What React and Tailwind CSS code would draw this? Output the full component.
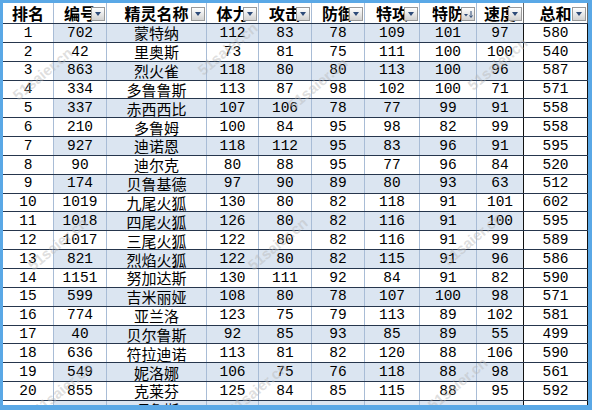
import React from "react"

const widths = [51, 53, 100, 52, 53, 53, 55, 57, 47, 64]
const headers = ["排名", "编号", "精灵名称", "体力", "攻击", "防御", "特攻", "特防", "速度", "总和"]

const rows = [
  [1, 702, "蒙特纳", 112, 83, 78, 109, 101, 97, 580],
  [2, 42, "里奥斯", 73, 81, 75, 111, 100, 100, 540],
  [3, 863, "烈火雀", 118, 80, 80, 113, 100, 96, 587],
  [4, 334, "多鲁鲁斯", 113, 87, 98, 102, 100, 71, 571],
  [5, 337, "赤西西比", 107, 106, 78, 77, 99, 91, 558],
  [6, 210, "多鲁姆", 100, 84, 95, 98, 82, 99, 558],
  [7, 927, "迪诺恩", 118, 112, 95, 83, 96, 91, 595],
  [8, 90, "迪尔克", 80, 88, 95, 77, 96, 84, 520],
  [9, 174, "贝鲁基德", 97, 90, 89, 80, 93, 63, 512],
  [10, 1019, "九尾火狐", 130, 80, 82, 118, 91, 101, 602],
  [11, 1018, "四尾火狐", 126, 80, 82, 116, 91, 100, 595],
  [12, 1017, "三尾火狐", 122, 80, 82, 116, 91, 99, 589],
  [13, 821, "烈焰火狐", 122, 80, 82, 115, 91, 96, 586],
  [14, 1151, "努加达斯", 130, 111, 92, 84, 91, 82, 590],
  [15, 599, "吉米丽娅", 108, 80, 78, 107, 100, 98, 571],
  [16, 774, "亚兰洛", 123, 75, 79, 113, 89, 102, 581],
  [17, 40, "贝尔鲁斯", 92, 85, 93, 85, 89, 55, 499],
  [18, 636, "符拉迪诺", 113, 81, 82, 120, 88, 106, 590],
  [19, 549, "妮洛娜", 106, 75, 76, 118, 88, 98, 561],
  [20, 855, "克莱芬", 125, 84, 85, 115, 88, 95, 592],
  ["", "", "嘎鲁斯", "", "", "", "", "", "", ""],
]

// watermark spots (center x, y)
const marks = [
  [40, 70], [225, 45], [315, 80], [495, 60],
  [55, 240], [275, 240], [470, 235],
  [60, 385], [255, 385], [455, 380],
]

function FilterBtn({ sorted }) {
  return (
    <div className="absolute right-[1px] bottom-[2px] w-[14px] h-[14px] border border-[#9a9a9a] bg-linear-to-b from-white to-[#d2d2d2] flex items-center justify-center">
      {sorted ? (
        <svg width="11" height="9" viewBox="0 0 11 9">
          <path d="M1 4h4l-2 2.5z" fill="#2d4a78" />
          <path d="M8 1v6M6.5 5.5L8 7.5 9.5 5.5" stroke="#2d4a78" strokeWidth="1" fill="none" />
        </svg>
      ) : (
        <div className="w-0 h-0 border-l-[3.5px] border-r-[3.5px] border-t-[4px] border-l-transparent border-r-transparent border-t-[#2d4a78]" />
      )}
    </div>
  )
}

export default function App() {
  return (
    <div className="w-[592px] h-[410px] bg-[#5aa8e6] pt-[3px] pl-[3px] pr-[4px] pb-[5px] overflow-hidden">
      <div className="relative h-full bg-white overflow-hidden">
        {/* header */}
        <div className="flex h-[21px] border-b border-[#26364d]">
          {headers.map((h, i) => (
            <div
              key={h}
              style={{ width: widths[i] }}
              className={`relative flex items-center justify-center shrink-0 border-r ${i >= 8 ? "border-[#6a6a6a]" : "border-[#a8bcd6]"} font-bold text-[16px] text-black overflow-hidden`}
            >
              <span className="font-['Noto_Sans_CJK_SC',sans-serif] leading-none whitespace-nowrap">{h}</span>
              {i > 0 && <FilterBtn sorted={i === 7} />}
            </div>
          ))}
        </div>

        {/* body */}
        {rows.map((r, ri) => (
          <div key={ri} className="flex h-[18.85px] border-b border-[#26364d]">
            {r.map((v, ci) => {
              const band = ri % 2 === 0 && ci > 0 && ci < 9
              const border = ci >= 8 ? "border-[#111]" : "border-[#a8bcd6]"
              return (
                <div
                  key={ci}
                  style={{ width: widths[ci] }}
                  className={`flex items-center justify-center shrink-0 border-r ${border} ${band ? "bg-[#dbe5f1]" : "bg-white"} text-black leading-none ${
                    ci === 2
                      ? "text-[15px] font-['Noto_Sans_CJK_SC',sans-serif]"
                      : "text-[14.5px] font-['Liberation_Mono',monospace]"
                  }`}
                >
                  {v}
                </div>
              )
            })}
          </div>
        ))}

        {/* watermark */}
        {marks.map(([x, y], i) => (
          <div
            key={i}
            style={{ left: x - 45, top: y - 10 }}
            className="absolute w-[90px] text-center -rotate-[40deg] text-[15px] font-bold text-[#b8b8b8]/45 font-['Liberation_Sans',sans-serif] pointer-events-none"
          >
            51saier.cn
          </div>
        ))}
      </div>
    </div>
  )
}
